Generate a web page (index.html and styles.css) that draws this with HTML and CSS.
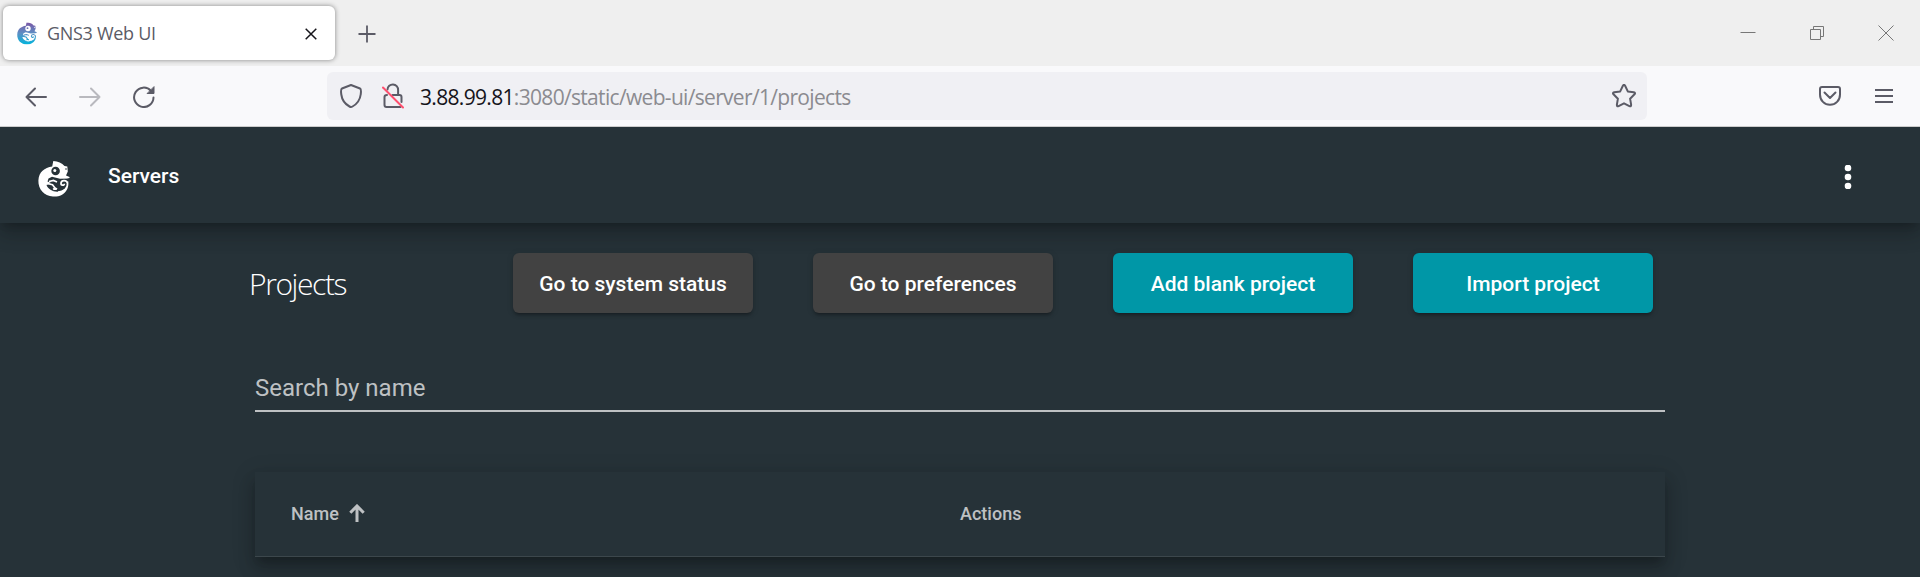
FILE: index.html
```html
<!DOCTYPE html>
<html lang="en">
<head>
<meta charset="utf-8">
<title>GNS3 Web UI</title>
<link rel="stylesheet" href="styles.css">
</head>
<body>
<svg class="defs" width="0" height="0">
  <defs>
    <linearGradient id="brand" x1="0" y1="0" x2="0" y2="1">
      <stop offset="0" stop-color="#7d55a5"/>
      <stop offset=".5" stop-color="#5c8fc4"/>
      <stop offset="1" stop-color="#00b4dc"/>
    </linearGradient>
    <mask id="cutout" maskUnits="userSpaceOnUse" x="0" y="0" width="32" height="36">
      <rect width="32" height="36" fill="#fff"/>
      <circle cx="17.600" cy="10" r="4.300" fill="#000"/>
      <circle cx="16.800" cy="9.400" r="1.500" fill="#fff"/>
      <circle cx="28" cy="8" r=".8" fill="#000"/>
      <path d="M32 17.400L22 17.800 14 15.800 10.500 17.500 9.500 20.500 13 22 8.500 24C10.500 29.500 18 32.500 24.500 29.500 28 28 30 25 29.500 22 29 19.500 32 19 32 17.400Z" fill="#000"/>
      <path d="M11 20.500l4.500-1 3.500 1.500M9 22.500l5.500 1.200 2.500 3.300-1.800 1.500M17 27l2 1.300" fill="none" stroke="#fff" stroke-width="1.700"/>
      <path d="M20 31c6 0 10-4 9.500-8.500-.5-3.500-6-3.800-6.500-.5-.3 2.600 3.300 3 3.400.8" fill="none" stroke="#fff" stroke-width="1.700"/>
    </mask>
    <symbol id="chameleon" viewBox="0 0 32 36">
      <path mask="url(#cutout)" d="M15.300 0C20 .2 24 2 26.500 5L29.300 5.500 29.800 10.500 28 14.500 31.500 16 31.500 17 29 18C31 20 30.800 25 29 28.500 26 34 20.500 36 15 35.500 6 35 0 28 .4 19.500.8 11 6.500 6.500 14.200 5.500Z"/>
    </symbol>
  </defs>
</svg>

<div class="tabbar">
  <div class="tab">
    <svg class="favicon" width="20" height="23"><use href="#chameleon"/></svg>
    <span class="tab-title">GNS3 Web UI</span>
    <svg class="tab-close" width="12" height="12" viewBox="0 0 12 12"><path d="M.7.7l10.600 10.600M11.300.7L.7 11.300"/></svg>
  </div>
  <svg class="new-tab" width="18" height="18" viewBox="0 0 18 18"><path d="M9 .5v17M.5 9h17"/></svg>
  <div class="window-controls">
    <svg width="16" height="16" viewBox="0 0 16 16"><path d="M.5 7.500h15"/></svg>
    <svg width="16" height="16" viewBox="0 0 16 16"><path d="M1.500 4.500h10v10h-10zM4.500 4.500v-3h10v10h-3"/></svg>
    <svg width="16" height="16" viewBox="0 0 16 16"><path d="M.5.5l15 15M15.500.5l-15 15"/></svg>
  </div>
</div>

<div class="toolbar">
  <div class="nav">
    <svg width="22" height="22" viewBox="0 0 22 22"><path d="M21 11H1.500M10 2.500L1.500 11l8.500 8.500"/></svg>
    <svg class="disabled" width="22" height="22" viewBox="0 0 22 22"><path d="M1 11h19.500M12 2.500l8.500 8.500-8.500 8.500"/></svg>
    <svg width="22" height="22" viewBox="0 0 22 22"><path d="M20.500 11.500A9.700 9.700 0 1 1 18 4.800"/><path class="solid" d="M21 1v6.500h-6.500z"/></svg>
  </div>
  <div class="address">
    <svg width="22" height="24" viewBox="0 0 22 24"><path d="M11 1L20 4.500C21.500 5.200 21 8 20.700 10.500 20 16 17 20 12.500 22.500Q11 23.300 9.500 22.500C5 20 2 16 1.300 10.500 1 8 .5 5.200 2 4.500Z"/></svg>
    <svg class="lock" width="22" height="26" viewBox="0 0 22 26"><path d="M5.500 6.500a5.300 5.300 0 0 1 10.600 .5v5h1.400q2 0 2 2v5M10.500 12H16M5 12Q2.500 12 2.500 14v8q0 2 2 2h14"/><path class="slash" d="M1 4.500l20 20"/></svg>
    <span class="url"><b>3.88.99.81</b>:3080/static/web-ui/server/1/projects</span>
    <svg class="star" width="24" height="24" viewBox="0 0 24 24"><path d="M10.900 1.800q1.100-2 2.200 0l2.700 5.600 6 .9q2 .5.700 2l-4.400 4.400 1 6q.2 2.200-1.700 1.400L12 19.300l-5.400 2.800q-1.900.8-1.700-1.400l1-6L1.500 10.300q-1.300-1.500.7-2l6-.9z"/></svg>
  </div>
  <div class="actions">
    <svg width="22" height="20" viewBox="0 0 22 20"><path d="M3 1h16q2 0 2 2v5.500c0 6-4.500 10.300-10 10.300S1 14.500 1 8.500V3q0-2 2-2zM5.500 6.500L11 12l5.500-5.500"/></svg>
    <svg width="18" height="16" viewBox="0 0 18 16"><path d="M.5 2h17M.5 8h17M.5 14h17"/></svg>
  </div>
</div>

<header class="app-header">
  <svg class="logo" width="32" height="36"><use href="#chameleon"/></svg>
  <span class="servers">Servers</span>
  <svg class="more" width="8" height="24" viewBox="0 0 8 24"><circle cx="4" cy="3" r="3.300"/><circle cx="4" cy="12" r="3.300"/><circle cx="4" cy="21" r="3.300"/></svg>
</header>

<main class="content">
  <div class="heading">
    <h1>Projects</h1>
    <div class="buttons">
      <button>Go to system status</button>
      <button>Go to preferences</button>
      <button class="primary">Add blank project</button>
      <button class="primary">Import project</button>
    </div>
  </div>
  <div class="search">Search by name</div>
  <div class="table-head">
    <div class="cell">Name
      <svg width="16" height="18" viewBox="0 0 16 18"><path d="M8 18V2M1.300 8.700L8 2l6.700 6.700"/></svg>
    </div>
    <div class="cell">Actions</div>
  </div>
</main>
</body>
</html>
```

FILE: styles.css
```css
* { box-sizing: border-box; }
body {
  margin: 0;
  height: 577px;
  overflow: hidden;
  background: #263238;
  font-family: Roboto, sans-serif;
}
svg { flex: none; display: block; }
.defs { position: absolute; }

.tabbar {
  height: 66px;
  display: flex;
  align-items: center;
  background: #efefef;
  padding: 0 26px 0 3px;
}
.tab {
  width: 332px;
  height: 54px;
  display: flex;
  align-items: center;
  padding: 0 18px 0 14px;
  background: #fff;
  border-radius: 6px;
  box-shadow: 0 0 5px rgba(0, 0, 0, .45);
}
.favicon { fill: url(#brand); }
.tab-title {
  margin-left: 10px;
  font: 18px "Open Sans", sans-serif;
  letter-spacing: -.3px;
  color: #5b5b66;
  white-space: nowrap;
}
.tab-close { margin-left: auto; margin-top: 1px; fill: none; stroke: #15141a; stroke-width: 1.5; }
.new-tab { margin-left: 23px; margin-top: 2px; fill: none; stroke: #5b5b66; stroke-width: 1.8; }
.window-controls { margin-left: auto; display: flex; gap: 53px; }
.window-controls svg { fill: none; stroke: #777; stroke-width: 1; }

.toolbar {
  position: relative;
  z-index: 1;
  height: 61px;
  display: flex;
  align-items: center;
  padding: 0 25px;
  background: #f9f9fb;
  border-bottom: 1px solid #ccc;
}
.toolbar svg {
  fill: none;
  stroke: #5b5b66;
  stroke-width: 2;
  stroke-linecap: round;
  stroke-linejoin: round;
}
.nav { display: flex; gap: 32px; width: 302px; padding-top: 2px; }
.toolbar .disabled { stroke: #b9b9be; }
.toolbar .solid { fill: #5b5b66; stroke-width: 1; }
.address {
  width: 1320px;
  height: 48px;
  display: flex;
  align-items: center;
  padding: 0 11px 0 13px;
  background: #f0f0f4;
  border-radius: 6px;
}
.lock { margin-left: 20px; }
.toolbar .lock .slash { stroke: #ff4f6e; }
.url {
  margin: 2px 0 0 16px;
  font: 21px "Open Sans", sans-serif;
  letter-spacing: -.68px;
  color: #8b8b90;
  white-space: nowrap;
}
.url b { font-weight: 400; color: #15141a; }
.star { margin-left: auto; }
.actions { margin-left: auto; display: flex; align-items: center; gap: 34px; padding-right: 2px; }

.app-header {
  height: 96px;
  display: flex;
  align-items: center;
  padding: 5px 68px 0 38px;
  color: #fff;
  background: #263238;
  box-shadow: 0 5px 8px -4px rgba(0, 0, 0, .2), 0 12px 18px 1px rgba(0, 0, 0, .14), 0 5px 21px 3px rgba(0, 0, 0, .12);
}
.logo { fill: #fff; margin-top: 2px; }
.servers { margin: -3px 0 0 38px; font-size: 21px; font-weight: 500; }
.more { margin: -2px 0 0 auto; fill: #fff; }

.content { width: 1410px; margin: 0 auto; }
.heading { height: 120px; display: flex; align-items: center; justify-content: space-between; padding-right: 12px; }
h1 {
  margin: 1px 0 0 -6px;
  font: 300 30px "Open Sans", sans-serif;
  letter-spacing: -1.4px;
  color: #fff;
}
.buttons { display: flex; gap: 60px; }
button {
  width: 240px;
  height: 60px;
  padding: 2px 0 0;
  border: 0;
  border-radius: 6px;
  font: 500 21px Roboto, sans-serif;
  color: #fff;
  background: #424242;
  box-shadow: 0 4px 2px -3px rgba(0, 0, 0, .2), 0 3px 3px rgba(0, 0, 0, .14), 0 1px 7px rgba(0, 0, 0, .12);
}
.primary { background: #0097a7; }
.search {
  height: 69px;
  padding-top: 31px;
  font-size: 24px;
  line-height: 28px;
  color: #bec1c3;
  border-bottom: 2px solid #bec1c3;
}
.table-head {
  display: grid;
  grid-template-columns: 669px 1fr;
  align-items: center;
  height: 85px;
  margin-top: 60px;
  padding: 0 0 2px 36px;
  border-bottom: 1px solid #3c474c;
  box-shadow: 0 8px 8px -5px rgba(0, 0, 0, .2), 0 12px 15px 2px rgba(0, 0, 0, .14), 0 5px 21px 3px rgba(0, 0, 0, .12);
}
.cell { display: flex; align-items: center; gap: 10px; font-size: 18px; font-weight: 500; color: #bec1c3; }
.cell svg { fill: none; stroke: #bec1c3; stroke-width: 3; }
```
